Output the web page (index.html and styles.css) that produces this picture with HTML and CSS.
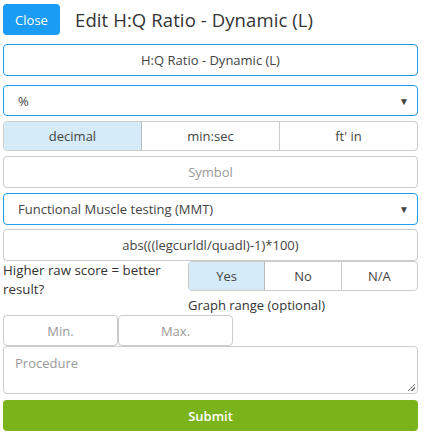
FILE: index.html
```html
<!DOCTYPE html>
<html>
<head>
<meta charset="utf-8">
<link rel="stylesheet" href="styles.css">
</head>
<body>
<div class="page">
  <div class="header">
    <button class="close">Close</button>
    <h1 class="title">Edit H:Q Ratio - Dynamic (L)</h1>
  </div>
  <div class="field focus name">H:Q Ratio - Dynamic (L)</div>
  <div class="select focus unit"><span>%</span><span class="arrow">▼</span></div>
  <div class="group fmt">
    <div class="seg active">decimal</div>
    <div class="seg">min:sec</div>
    <div class="seg">ft' in</div>
  </div>
  <div class="field placeholder symbol">Symbol</div>
  <div class="select focus cat"><span>Functional Muscle testing (MMT)</span><span class="arrow">▼</span></div>
  <div class="field formula">abs(((legcurldl/quadl)-1)*100)</div>
  <div class="better">
    <div class="label">Higher raw score = better result?</div>
    <div class="group yn">
      <div class="seg active">Yes</div>
      <div class="seg">No</div>
      <div class="seg">N/A</div>
    </div>
  </div>
  <div class="range-label">Graph range (optional)</div>
  <div class="range">
    <div class="field placeholder small">Min.</div>
    <div class="field placeholder small">Max.</div>
  </div>
  <div class="textarea placeholder">Procedure<span class="grip"></span></div>
  <button class="submit">Submit</button>
</div>
</body>
</html>
```

FILE: styles.css
```css
* { box-sizing: border-box; }
body {
  margin: 0;
  font-family: "Open Sans", "Noto Sans", sans-serif;
  font-size: 13px;
  color: #444;
  background: #fff;
}
.page {
  width: 415px;
  margin-left: 3px;
  padding-top: 4px;
  display: flex;
  flex-direction: column;
}
.header {
  display: flex;
  align-items: center;
  height: 31px;
}
.close {
  width: 57px;
  height: 31px;
  border: none;
  border-radius: 4px;
  background: #1a9bf4;
  color: #fff;
  font-family: inherit;
  font-size: 13px;
  padding: 0;
}
.title {
  margin: 0 0 0 15px;
  font-weight: normal;
  font-size: 18.5px;
  color: #333;
  letter-spacing: 0.1px;
}
.field, .select {
  height: 32px;
  border: 1px solid #ccc;
  border-radius: 4px;
  display: flex;
  align-items: center;
  justify-content: center;
  color: #444;
}
.focus { border-color: #1e9cf0; }
.name { margin-top: 9px; }
.select {
  justify-content: space-between;
  padding: 0 8px 0 14px;
  height: 31px;
}
.unit { margin-top: 9px; }
.arrow { font-size: 10px; color: #444; }
.placeholder { color: #999; }
.group {
  display: flex;
  border: 1px solid #ccc;
  border-radius: 4px;
  overflow: hidden;
  height: 30px;
}
.seg {
  flex: 1;
  display: flex;
  align-items: center;
  justify-content: center;
  color: #444;
}
.seg + .seg { border-left: 1px solid #ccc; }
.seg.active { background: #d5ebf8; border-right: 1px solid #bbb; }
.seg.active + .seg { border-left: none; }
.fmt { margin-top: 5px; }
.symbol { margin-top: 5px; }
.cat { margin-top: 5px; height: 32px; }
.formula { margin-top: 4px; }
.better {
  display: flex;
  align-items: flex-start;
}
.label {
  width: 185px;
  line-height: 19px;
  color: #333;
  font-size: 13.3px;
  padding-top: 0;
}
.yn { width: 230px; height: 30px; }
.range-label {
  margin-left: 185px;
  margin-top: -3px;
  line-height: 19px;
  color: #333;
}
.range {
  display: flex;
  margin-top: 0;
}
.small { width: 115px; height: 31px; }
.textarea {
  position: relative;
  height: 48px;
  border: 1px solid #ccc;
  border-radius: 4px;
  padding: 6px 11px;
  line-height: 20px;
}
.grip {
  position: absolute;
  right: 2px;
  bottom: 2px;
  width: 7px;
  height: 7px;
  background: linear-gradient(135deg, transparent 0 45%, #777 45% 55%, transparent 55% 70%, #777 70% 80%, transparent 80%);
}
.submit {
  margin-top: 6px;
  height: 31px;
  border: none;
  border-radius: 4px;
  background: #7bb31a;
  color: #fff;
  font-family: inherit;
  font-size: 13px;
  font-weight: 600;
}
```
